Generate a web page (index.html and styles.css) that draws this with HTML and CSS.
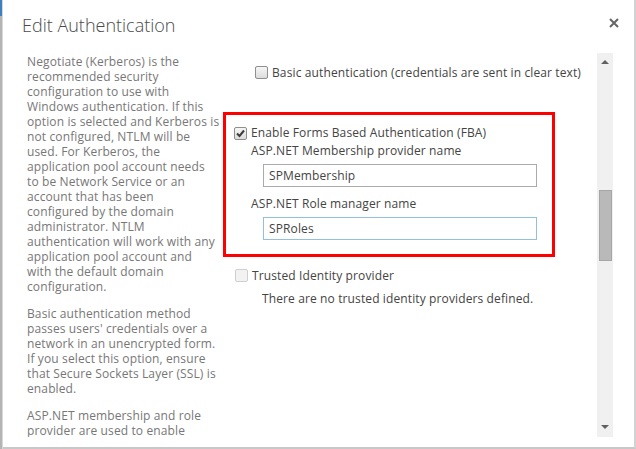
FILE: index.html
```html
<!DOCTYPE html>
<html>
<head>
<meta charset="utf-8">
<link rel="stylesheet" href="styles.css">
</head>
<body>
<div class="screen">
  <div class="backdrop"><div class="backdrop-top"></div></div>
  <div class="dialog">
    <div class="dialog-header">
      <h1 class="dialog-title">Edit Authentication</h1>
      <button class="close" aria-label="Close">
        <svg width="10" height="10" viewBox="0 0 10 10"><path d="M1 1 L9 9 M9 1 L1 9" stroke="#666" stroke-width="2" fill="none"/></svg>
      </button>
    </div>
    <div class="dialog-body">
      <div class="desc">
        <p>Negotiate (Kerberos) is the<br>recommended security<br>configuration to use with<br>Windows authentication. If this<br>option is selected and Kerberos is<br>not configured, NTLM will be<br>used. For Kerberos, the<br>application pool account needs<br>to be Network Service or an<br>account that has been<br>configured by the domain<br>administrator. NTLM<br>authentication will work with any<br>application pool account and<br>with the default domain<br>configuration.</p>
        <p>Basic authentication method<br>passes users' credentials over a<br>network in an unencrypted form.<br>If you select this option, ensure<br>that Secure Sockets Layer (SSL) is<br>enabled.</p>
        <p>ASP.NET membership and role<br>provider are used to enable</p>
      </div>
      <div class="fields">
        <div class="check-row basic-row"><span class="cb"></span><span>Basic authentication (credentials are sent in clear text)</span></div>
        <div class="fba-box">
          <div class="check-row fba-row"><span class="cb checked"><svg width="11" height="11" viewBox="0 0 11 11"><path d="M2 5.5 L4.5 8 L9 2.5" stroke="#3c3c3c" stroke-width="2" fill="none"/></svg></span><span>Enable Forms Based Authentication (FBA)</span></div>
          <div class="fba-fields">
            <div class="field-label">ASP.NET Membership provider name</div>
            <div class="text-input">SPMembership</div>
            <div class="field-label">ASP.NET Role manager name</div>
            <div class="text-input focused">SPRoles</div>
          </div>
        </div>
        <div class="check-row trusted-row"><span class="cb disabled"></span><span>Trusted Identity provider</span></div>
        <div class="note">There are no trusted identity providers defined.</div>
      </div>
      <div class="scrollbar">
        <div class="arrow up"></div>
        <div class="track"><div class="thumb"></div></div>
        <div class="arrow down"></div>
      </div>
    </div>
  </div>
</div>
</body>
</html>
```
FILE: styles.css
```css
* { box-sizing: border-box; }
html, body { margin: 0; padding: 0; }
body {
  width: 636px;
  height: 449px;
  overflow: hidden;
  font-family: "Open Sans", "Noto Sans", sans-serif;
  font-size: 12px;
  letter-spacing: 0.12px;
  color: #444;
  background: #fff;
}
.screen {
  display: flex;
  width: 636px;
  height: 449px;
}
.backdrop {
  width: 3px;
  background: #b4b4b4;
  border-right: 1px solid #d8d8d8;
}
.backdrop-top {
  height: 16px;
  background: #3f7fbf;
}
.dialog {
  flex: 1;
  display: flex;
  flex-direction: column;
  background: #fff;
  border-right: 2px solid #d2d2d2;
  border-bottom: 2px solid #c8c8c8;
  padding-bottom: 10px;
}
.dialog-header {
  height: 53px;
  display: flex;
  justify-content: space-between;
  align-items: flex-start;
  padding: 11px 15px 0 19px;
}
.dialog-title {
  margin: 0;
  font-size: 18px;
  line-height: 28px;
  font-weight: 300;
  letter-spacing: 0;
  color: #4a4a4a;
}
.close {
  margin-top: 7px;
  padding: 0;
  border: 0;
  background: none;
  width: 10px;
  height: 10px;
  display: flex;
}
.dialog-body {
  flex: 1;
  display: flex;
  overflow: hidden;
}
.desc {
  flex: 0 0 196px;
  margin-left: 24px;
  padding-top: 1px;
  color: #777;
  line-height: 15px;
  white-space: nowrap;
}
.desc p { margin: 0 0 12px; }
.fields {
  flex: 1;
  padding-top: 12px;
}
.check-row {
  display: flex;
  align-items: center;
  gap: 4px;
  line-height: 15px;
}
.basic-row { margin-left: 32px; }
.cb {
  width: 13px;
  height: 13px;
  flex: none;
  border: 1px solid #8f8f8f;
  border-radius: 2px;
  background: linear-gradient(#f6f6f6, #dcdcdc);
  display: flex;
  align-items: center;
  justify-content: center;
}
.cb.disabled {
  border-color: #cfcfcf;
  background: #f2f2f2;
}
.fba-box {
  margin-top: 32px;
  width: 332px;
  border: 3px solid #f00;
  padding: 9px 0 14px 8px;
}
.fba-row { line-height: 18px; }
.fba-fields {
  padding-left: 17px;
  line-height: 18px;
}
.field-label { height: 18px; }
.text-input {
  margin: 4px 0 8px 12px;
  width: 274px;
  height: 23px;
  border: 1px solid #ababab;
  padding-left: 5px;
  line-height: 21px;
  color: #444;
}
.text-input.focused {
  border-color: #92c0e0;
  margin-bottom: 0;
}
.trusted-row {
  margin-top: 11px;
  margin-left: 12px;
}
.note {
  margin-top: 8px;
  margin-left: 39px;
  line-height: 15px;
}
.scrollbar {
  flex: 0 0 16px;
  margin-right: 21px;
  height: 384px;
  background: #f0f0f0;
  display: flex;
  flex-direction: column;
  align-items: center;
}
.arrow {
  width: 0;
  height: 0;
  border-left: 4px solid transparent;
  border-right: 4px solid transparent;
}
.arrow.up {
  margin-top: 7px;
  border-bottom: 4px solid #606060;
}
.arrow.down {
  margin-bottom: 8px;
  border-top: 4px solid #606060;
}
.track {
  flex: 1;
  width: 100%;
  padding-top: 126px;
  display: flex;
  justify-content: center;
}
.thumb {
  width: 13px;
  height: 71px;
  background: #b9b9b9;
  border: 1px solid #a6a6a6;
}
```
